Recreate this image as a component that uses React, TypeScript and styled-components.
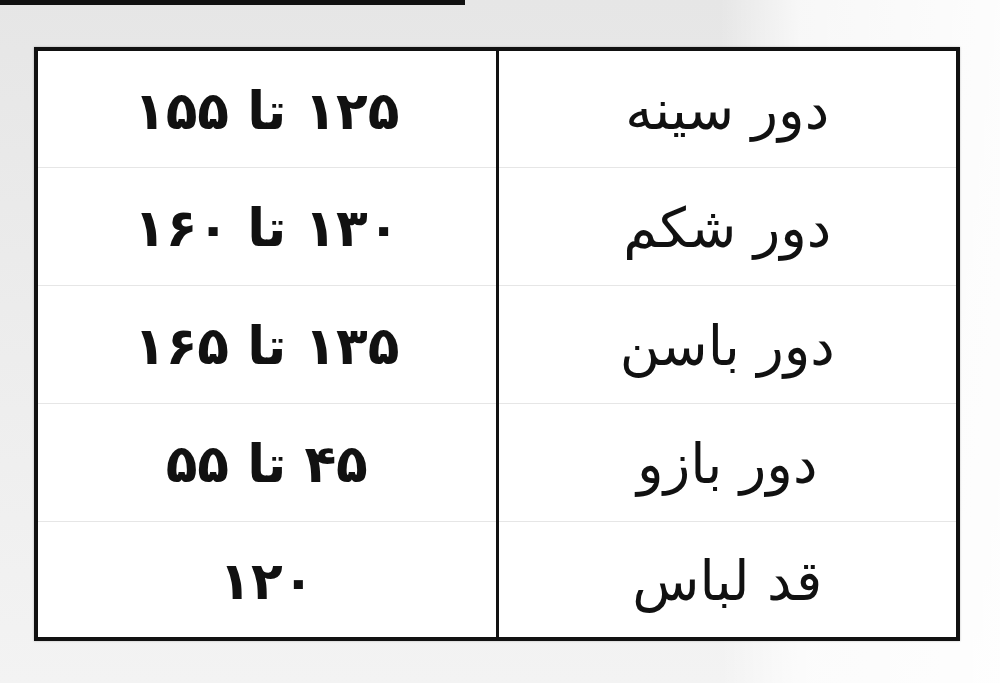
import styled, { createGlobalStyle } from "styled-components";

const GlobalStyle = createGlobalStyle`
  html, body {
    margin: 0;
    padding: 0;
  }
  body {
    width: 1000px;
    height: 683px;
    overflow: hidden;
    background:
      linear-gradient(90deg, rgba(255,255,255,0) 0%, rgba(255,255,255,0) 72%, rgba(255,255,255,0.7) 80%, rgba(255,255,255,0.9) 100%),
      linear-gradient(180deg, #e6e6e6 0%, #eeeeee 60%, #f3f3f3 100%);
    font-family: "DejaVu Sans", "Liberation Sans", sans-serif;
  }
`;

const Page = styled.div`
  width: 1000px;
  height: 683px;
  display: flex;
  flex-direction: column;
`;

const TopBar = styled.div`
  width: 465px;
  height: 5px;
  background: #111;
`;

const TableWrap = styled.div`
  padding: 42px 0 0 34px;
`;

const Table = styled.table`
  direction: rtl;
  width: 926px;
  border-collapse: collapse;
  border: 4px solid #111;
  background: #fff;
  box-shadow: 0 0 2px rgba(0, 0, 0, 0.25);
`;

const Row = styled.tr`
  & + & td {
    border-top: 1px solid #e6e6e6;
  }
`;

const Cell = styled.td<{ $value?: boolean }>`
  box-sizing: border-box;
  width: 50%;
  height: 118px;
  text-align: center;
  vertical-align: middle;
  padding: 4px 0 0;
  color: #111;
  line-height: 1;
  font-size: ${({ $value }) => ($value ? "52px" : "55px")};
  font-weight: ${({ $value }) => ($value ? 700 : 400)};
  border-left: ${({ $value }) => ($value ? "none" : "3px solid #111")};
`;

const rows = [
  ["دور سینه", "۱۲۵ تا ۱۵۵"],
  ["دور شکم", "۱۳۰ تا ۱۶۰"],
  ["دور باسن", "۱۳۵ تا ۱۶۵"],
  ["دور بازو", "۴۵ تا ۵۵"],
  ["قد لباس", "۱۲۰"],
];

const App = () => {
  return (
    <Page>
      <GlobalStyle />
      <TopBar />
      <TableWrap>
        <Table>
          <tbody>
            {rows.map(([label, value]) => (
              <Row key={label}>
                <Cell>{label}</Cell>
                <Cell $value>{value}</Cell>
              </Row>
            ))}
          </tbody>
        </Table>
      </TableWrap>
    </Page>
  );
};

export default App;
